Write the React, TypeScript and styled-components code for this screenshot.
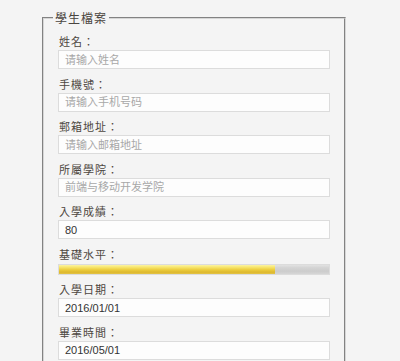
import styled, { createGlobalStyle } from 'styled-components';

const GlobalStyle = createGlobalStyle`
    body {
        margin: 8px;
        background: #f4f4f4;
        font-family: 'Noto Sans CJK TC', 'Noto Sans CJK SC', sans-serif;
    }
`;

type FieldItem = {
    label: string;
    placeholder?: string;
    value?: string;
};

const topFields: FieldItem[] = [
    { label: '姓名：', placeholder: '请输入姓名' },
    { label: '手機號：', placeholder: '请输入手机号码' },
    { label: '郵箱地址：', placeholder: '请输入邮箱地址' },
    { label: '所屬學院：', placeholder: '前端与移动开发学院' },
    { label: '入學成績：', value: '80' },
];

const dateFields: FieldItem[] = [
    { label: '入學日期：', value: '2016/01/01' },
    { label: '畢業時間：', value: '2016/05/01' },
];

function renderField(item: FieldItem) {
    return (
        <Field key={item.label}>
            <Label>{item.label}</Label>
            <TextInput type="text" placeholder={item.placeholder} defaultValue={item.value} />
        </Field>
    );
}

function App() {
    const level = 80;

    return (
        <>
            <GlobalStyle />
            <Fieldset>
                <Legend>學生檔案</Legend>
                <FormBody>
                    {topFields.map(renderField)}
                    <Field>
                        <Label>基礎水平：</Label>
                        <Track>
                            <Fill $percent={level} />
                        </Track>
                    </Field>
                    {dateFields.map(renderField)}
                </FormBody>
            </Fieldset>
        </>
    );
}

export default App;

const Fieldset = styled.fieldset`
    box-sizing: border-box;
    width: 304px;
    margin: 0 0 0 34px;
    padding: 0 9px 10px;
    border: 2px groove #d6d6d6;
    background: #f4f4f4;
`;

const Legend = styled.legend`
    padding: 0 2px;
    font-size: 12px;
    line-height: 20px;
    letter-spacing: 1px;
    color: #4a4540;
`;

const FormBody = styled.div`
    display: flex;
    flex-direction: column;
    gap: 6.5px;
    padding: 5px 5px 0;
`;

const Field = styled.div`
    display: flex;
    flex-direction: column;
    gap: 1px;
`;

const Label = styled.label`
    display: block;
    font-size: 11px;
    line-height: 16px;
    letter-spacing: 1px;
    color: #4d4741;
    padding-left: 1px;
`;

const TextInput = styled.input`
    box-sizing: border-box;
    width: 272px;
    height: 19px;
    margin: 0;
    padding: 0 6px;
    border: 1px solid #dcdcdc;
    background: #fdfdfd;
    font-family: 'Liberation Sans', 'Noto Sans CJK SC', sans-serif;
    font-size: 11px;
    color: #333;
    outline: none;

    &::placeholder {
        color: #a8a8a8;
    }
`;

const Track = styled.div`
    box-sizing: border-box;
    width: 272px;
    height: 11px;
    margin-top: 1px;
    background: linear-gradient(to bottom, #e2e2e2 0%, #d4d4d4 30%, #cccccc 70%, #d6d6d6 100%);
    border: 1px solid #dcdcdc;
    overflow: hidden;
`;

const Fill = styled.div<{ $percent: number }>`
    width: ${(p) => p.$percent}%;
    height: 100%;
    background: linear-gradient(
        to bottom,
        #fbf3a4 0%,
        #f7e56b 25%,
        #ebcb3c 55%,
        #ddb82e 80%,
        #e4c447 100%
    );
`;
